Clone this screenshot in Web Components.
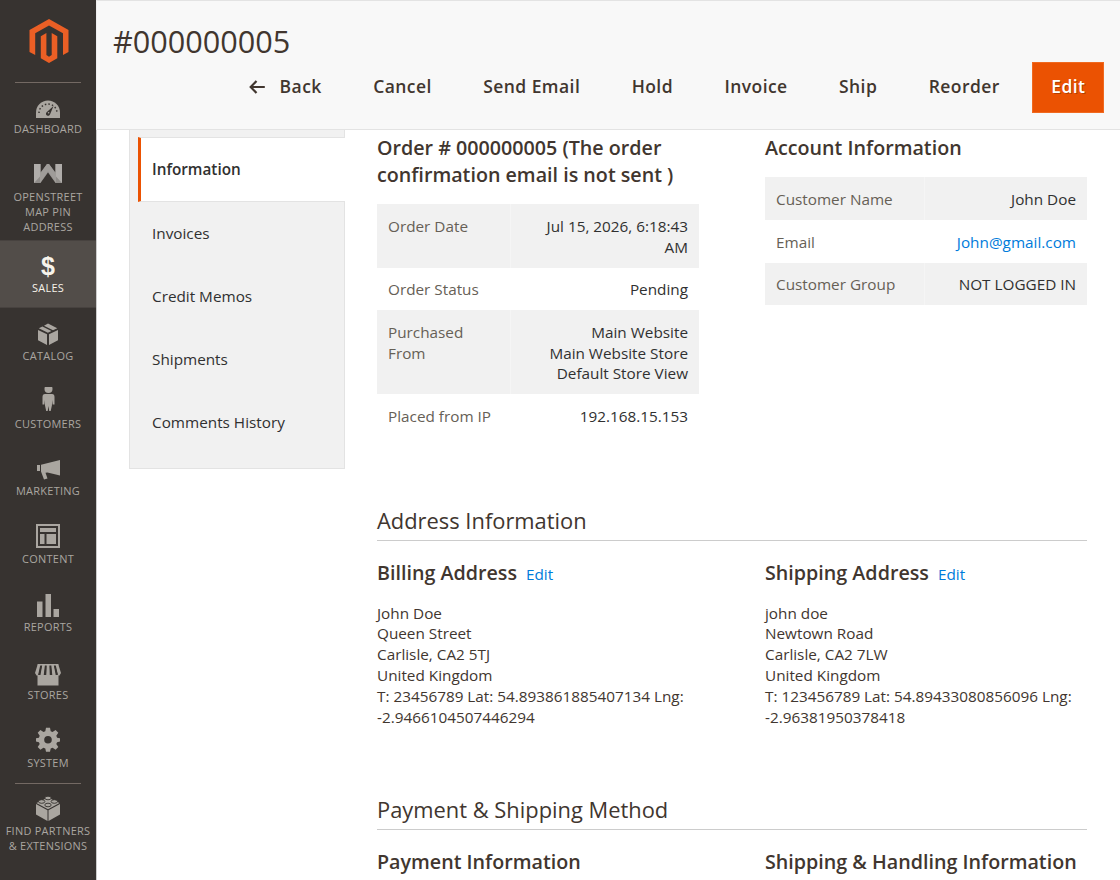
<!DOCTYPE html>
<html lang="en">
<head>
<meta charset="utf-8">
<title>#000000005 / Orders / Sales</title>
<style>
  html {
    font-size: 10.94px;
  }
  body {
    margin: 0;
    height: 880px;
    overflow: hidden;
    font-family: 'Open Sans', 'Noto Sans', sans-serif;
    font-size: 1.4rem;
    line-height: 1.36;
    color: #41362f;
    background: #fff;
  }
</style>
</head>
<body>
<admin-page>
  <admin-menu slot="menu">
    <menu-item icon="dashboard">Dashboard</menu-item>
    <menu-item icon="module" style="height: 90.9px">Openstreet Map Pin Address</menu-item>
    <menu-item icon="sales" active>Sales</menu-item>
    <menu-item icon="catalog">Catalog</menu-item>
    <menu-item icon="customers">Customers</menu-item>
    <menu-item icon="marketing">Marketing</menu-item>
    <menu-item icon="content">Content</menu-item>
    <menu-item icon="reports">Reports</menu-item>
    <menu-item icon="stores">Stores</menu-item>
    <menu-item icon="system">System</menu-item>
    <menu-item icon="partners" divided>Find Partners &amp; Extensions</menu-item>
  </admin-menu>

  <page-header slot="header" heading="#000000005">
    <page-action back>Back</page-action>
    <page-action>Cancel</page-action>
    <page-action>Send Email</page-action>
    <page-action>Hold</page-action>
    <page-action>Invoice</page-action>
    <page-action>Ship</page-action>
    <page-action>Reorder</page-action>
    <page-action primary>Edit</page-action>
  </page-header>

  <order-tabs slot="tabs">
    <order-tab active>Information</order-tab>
    <order-tab>Invoices</order-tab>
    <order-tab>Credit Memos</order-tab>
    <order-tab>Shipments</order-tab>
    <order-tab>Comments History</order-tab>
  </order-tabs>

  <page-section style="height: 372px">
    <info-block heading="Order # 000000005 (The order confirmation email is not sent )">
      <info-table label-width="134px">
        <info-row label="Order Date">Jul 15, 2026, 6:18:43 AM</info-row>
        <info-row label="Order Status">Pending</info-row>
        <info-row label="Purchased From">Main Website<br>Main Website Store<br>Default Store View</info-row>
        <info-row label="Placed from IP">192.168.15.153</info-row>
      </info-table>
    </info-block>
    <info-block heading="Account Information">
      <info-table label-width="160px">
        <info-row label="Customer Name">John Doe</info-row>
        <info-row label="Email"><text-link>John@gmail.com</text-link></info-row>
        <info-row label="Customer Group">NOT LOGGED IN</info-row>
      </info-table>
    </info-block>
  </page-section>

  <page-section heading="Address Information" style="height: 289px">
    <info-block heading="Billing Address">
      <text-link slot="action">Edit</text-link>
      John Doe<br>Queen Street<br>Carlisle, CA2 5TJ<br>United Kingdom<br>T: 23456789 Lat: 54.893861885407134 Lng: -2.9466104507446294
    </info-block>
    <info-block heading="Shipping Address">
      <text-link slot="action">Edit</text-link>
      john doe<br>Newtown Road<br>Carlisle, CA2 7LW<br>United Kingdom<br>T: 123456789 Lat: 54.89433080856096 Lng: -2.96381950378418
    </info-block>
  </page-section>

  <page-section heading="Payment &amp; Shipping Method">
    <info-block heading="Payment Information"></info-block>
    <info-block heading="Shipping &amp; Handling Information"></info-block>
  </page-section>
</admin-page>

<script>
const ICONS = {
  dashboard: `<g transform="translate(0 2)"><path d="M3 23V17.500a12 12 0 0 1 24 0V23z"/>
    <path d="M6 18a9 9 0 0 1 18 0" fill="none" stroke="#373330" stroke-width="1.500" stroke-dasharray="1.500 2.100"/>
    <path d="M20.500 11l-3.400 8.200a2.100 2.100 0 1 1-3.500-2z" fill="#373330"/><circle cx="15.600" cy="17.800" r=".8"/></g>`,
  module: `<g transform="translate(0 -2)"><path fill="#8f8c89" d="M1 6h6.500v8.500L14 6h2l6.500 8.500V6H29v19h-6.500L15 14.500 7.500 25H1z"/>
    <path fill="#b0adaa" d="M1 6h6.500v12L1 25zM22.500 6H29v19l-6.500-7z"/><path fill="#9f9c99" d="M14 6h2l7 10v9L15 13.500 7 25v-9z"/></g>`,
  catalog: `<path d="M5 11l9 4.300V26l-9-4.800zM16 15.300L25 11v10.200L16 26zM5.800 9.300l3.600-1.800 9 4.400-3.500 1.800zM11 6.700L15 4.500l9.300 4.700-4.300 2z"/>`,
  customers: `<g transform="translate(.5 -2)"><circle cx="15" cy="4" r="4"/><path d="M11.500 9h7q2.500 0 2.500 3v7.500h-1.900l-.4-4.500-.3 5.500-1.200 5.500h-1.500l-.7-5-.8 5h-1.500L11.500 20.500 11.300 15l-.4 4.500H9V12q0-3 2.500-3z"/></g>`,
  marketing: `<g transform="translate(0 1)"><path d="M4 9h3v6H4zM8 8.800L27 4v15.500l-12.500-3-2 .3 2 5.800-3.500 1-3-8H8z"/></g>`,
  content: `<g transform="translate(0 -2)"><path d="M3 3h24v24H3zM5 5v20h20V5z" fill-rule="evenodd"/><path d="M7 7h16v4H7zM7 13h4.500v10H7zM13.500 13H23v10h-9.500z"/></g>`,
  reports: `<g transform="translate(0 -1)"><path d="M4 11.500h5.500V27H4zM12.500 4H18v23h-5.500zM20.500 19H26v8h-5.500z"/></g>`,
  stores: `<g transform="translate(0 1)"><path d="M4.500 15h21v10.500h-21zM4.500 4h21v1.500h-21z"/>
    <path d="M4.500 5h2.800L5 15.500H3.500L2 13zM9.200 5h2.700l-1.200 10.500H7.400zM13.700 5h2.700l.4 10.500h-3.600zM18.300 5h2.500l2 10.500h-3.500zM22.700 5h2.800L28 13l-1.500 2.500H25z"/>
    <path d="M7.700 6h1.200L6.800 14.500H5.600zM12.300 6h1l-.3 8.500h-1.600zM16.800 6h1l1 8.500h-1.600zM21.200 6h1.200l2.300 8.500h-1.400z" fill="#373330"/></g>`,
  system: `<path transform="translate(0 -1.3)" fill-rule="evenodd" d="M13 3h4l.7 3.600 1.800.8 3.100-2.100 2.700 2.700-2 3.100.8 1.900L27 13.500v3.300l-2.900.7-.8 1.900 2 3-2.700 2.700-3-2-1.900.8L17 27h-4l-.7-3.100-1.900-.8-3 2-2.700-2.700 2-3-.8-1.900L3 16.800v-3.300l2.900-.5.8-1.900-2-3.100 2.700-2.700 3.100 2.100 1.800-.8zM15 11.200a3.800 3.800 0 1 0 0 7.600 3.800 3.800 0 1 0 0-7.600z"/>`,
  partners: `<path d="M3 10l11.500 6.300V27L3 20.500zM27 10l-11.500 6.300V27L27 20.500zM3.500 9L15 3.500 26.500 9 15 15.300z"/>
    <g stroke="#373330" stroke-width=".9"><ellipse cx="15" cy="4" rx="3.200" ry="1.800"/><ellipse cx="8.700" cy="7.500" rx="3.200" ry="1.800"/><ellipse cx="21.300" cy="7.500" rx="3.200" ry="1.800"/><ellipse cx="15" cy="11" rx="3.200" ry="1.800"/></g>`
};

class AdminPage extends HTMLElement {
  constructor() {
    super();
    this.attachShadow({mode: 'open'}).innerHTML = `
      <style>
        :host { display: flex; height: 880px; }
        main { flex: 1; min-width: 0; display: flex; flex-direction: column; }
        .body { flex: 1; min-height: 0; display: flex; align-items: flex-start; gap: 32px; padding: 0 33px 0 32px; border-left: 1px solid #ccc; overflow: hidden; }
        .content { flex: 1; min-width: 0; padding-top: 4px; }
      </style>
      <slot name="menu"></slot>
      <main>
        <slot name="header"></slot>
        <div class="body">
          <slot name="tabs"></slot>
          <div class="content"><slot></slot></div>
        </div>
      </main>
    `;
  }
}

class AdminMenu extends HTMLElement {
  constructor() {
    super();
    this.attachShadow({mode: 'open'}).innerHTML = `
      <style>
        :host { display: flex; flex-direction: column; flex: 0 0 96px; background: #373330; }
        .logo { display: flex; justify-content: center; height: 63px; padding: 19px 0 0 1px; border-bottom: 1px solid #736963; margin: 0 15px -1.4px; }
      </style>
      <div class="logo">
        <svg width="40" height="44" viewBox="0 0 40 44" fill="#eb5f25">
          <path d="M20 0l19.500 11v22L34 36V14.300L20 6.400 6.200 14.300V36L.500 33V11z"/>
          <path d="M11.800 17.200l5.600-3.200v22l2.600 1.700 2.700-1.700V14l5.600 3.200v22L20 44l-8.200-4.800z"/>
        </svg>
      </div>
      <slot></slot>
    `;
  }
}

class MenuItem extends HTMLElement {
  connectedCallback() {
    const icon = this.getAttribute('icon');
    // the sales icon is simply a bold currency sign
    const glyph = icon === 'sales'
      ? '<b>$</b>'
      : `<svg width="30" height="30" viewBox="0 0 30 30" fill="currentColor">${ICONS[icon]}</svg>`;

    this.attachShadow({mode: 'open'}).innerHTML = `
      <style>
        :host {
          display: block;
          box-sizing: border-box;
          height: 67.86px;
          padding: 12px 4px 0;
          color: #aaa6a0;
          font-size: 1rem;
          line-height: 14.8px;
          letter-spacing: .025em;
          text-align: center;
          text-transform: uppercase;
        }
        :host([active]) { background: #524d49; color: #f7f3eb; box-shadow: inset 0 1px #47423f, inset 0 -1px #47423f; }
        :host([divided])::before { content: ''; display: block; height: 1px; margin: -12px 11px 11px; background: #736963; }
        .icon { display: flex; justify-content: center; align-items: center; height: 28px; margin-bottom: .5px; }
        .icon svg { flex: none; }
        b { font: bold 25px/28px 'Liberation Sans', sans-serif; letter-spacing: 0; }
      </style>
      <div class="icon">${glyph}</div>
      <slot></slot>
    `;
  }
}

class PageHeader extends HTMLElement {
  connectedCallback() {
    this.attachShadow({mode: 'open'}).innerHTML = `
      <style>
        :host { display: block; box-sizing: border-box; height: 130px; padding: 20px 16px 0; background: #f8f8f8; border: solid #e3e3e3; border-width: 1px 0; border-left: 1px solid #eee; }
        h1 { margin: 0; font-size: 2.8rem; font-weight: 400; line-height: 41px; }
        .actions { display: flex; justify-content: flex-end; gap: 1.3rem; }
      </style>
      <h1>${this.getAttribute('heading')}</h1>
      <div class="actions"><slot></slot></div>
    `;
  }
}

class PageAction extends HTMLElement {
  connectedCallback() {
    const arrow = this.hasAttribute('back')
      ? '<svg width="16" height="14" viewBox="0 0 16 14" fill="none" stroke="currentColor" stroke-width="2.2"><path d="M15.800 7H2M7.500 1L1.700 7l5.800 6"/></svg>'
      : '';
    this.attachShadow({mode: 'open'}).innerHTML = `
      <style>
        :host { display: flex; align-items: center; gap: 15px; box-sizing: border-box; height: 51px; padding: 0 1.7rem 2px; font-size: 1.6rem; font-weight: 600; letter-spacing: .025em; white-space: nowrap; }
        :host([primary]) { margin-left: -.4px; padding-left: 19px; background: #eb5202; box-shadow: inset 0 0 0 1px #f0691f; color: #fff; text-shadow: 1px 1px 0 rgba(0, 0, 0, .25); }
      </style>
      ${arrow}<slot></slot>
    `;
  }
}

class OrderTabs extends HTMLElement {
  constructor() {
    super();
    this.attachShadow({mode: 'open'}).innerHTML = `
      <style>
        :host { display: block; box-sizing: border-box; flex: 0 0 216px; height: 339px; padding: 7px 0 0 8px; background: #f1f1f1; border: 1px solid #e3e3e3; border-top: 0; }
      </style>
      <slot></slot>
    `;
  }
}

class OrderTab extends HTMLElement {
  constructor() {
    super();
    this.attachShadow({mode: 'open'}).innerHTML = `
      <style>
        :host { display: flex; align-items: center; box-sizing: border-box; height: 63px; padding-left: 14px; color: #303030; }
        :host([active]) { height: 65px; margin-bottom: -.6px; padding-left: 11px; margin-right: -1px; border: solid #e3e3e3; border-width: 1px 0; border-left: 3px solid #eb5202; background: #fff; font-weight: 600; }
      </style>
      <slot></slot>
    `;
  }
}

class PageSection extends HTMLElement {
  connectedCallback() {
    const heading = this.getAttribute('heading');
    this.attachShadow({mode: 'open'}).innerHTML = `
      <style>
        :host { display: block; }
        h2 { margin: 0 0 18px; padding: 1px 0 5px; border-bottom: 1px solid #ccc; font-size: 2rem; font-weight: 400; line-height: 28px; }
        .columns { display: grid; grid-template-columns: 1fr 1fr; gap: 66px; }
      </style>
      ${heading ? `<h2>${heading}</h2>` : ''}
      <div class="columns"><slot></slot></div>
    `;
  }
}

class InfoBlock extends HTMLElement {
  connectedCallback() {
    this.attachShadow({mode: 'open'}).innerHTML = `
      <style>
        :host { display: block; min-width: 0; }
        header { display: flex; align-items: baseline; gap: 9px; margin-bottom: 16.6px; }
        h3 { margin: 0; font-size: 1.8rem; font-weight: 600; line-height: 27px; }
      </style>
      <header><h3>${this.getAttribute('heading')}</h3><slot name="action"></slot></header>
      <slot></slot>
    `;
  }
}

class InfoTable extends HTMLElement {
  connectedCallback() {
    this.style.setProperty('--label-width', this.getAttribute('label-width'));
    this.attachShadow({mode: 'open'}).innerHTML = `
      <style>
        :host { display: block; margin-top: -.4px; line-height: 20.7px; }
        ::slotted(:nth-child(odd)) { --row-bg: #f1f1f1; }
      </style>
      <slot></slot>
    `;
  }
}

class InfoRow extends HTMLElement {
  connectedCallback() {
    this.attachShadow({mode: 'open'}).innerHTML = `
      <style>
        :host { display: flex; background: var(--row-bg, #fff); }
        div { box-sizing: border-box; padding: 11.8px 11px 10.2px; }
        .label { flex: 0 0 var(--label-width); color: #666056; border-right: 1px solid rgba(255, 255, 255, .3); }
        .value { flex: 1; color: #303030; text-align: right; }
      </style>
      <div class="label">${this.getAttribute('label')}</div>
      <div class="value"><slot></slot></div>
    `;
  }
}

class TextLink extends HTMLElement {
  constructor() {
    super();
    this.attachShadow({mode: 'open'}).innerHTML = `
      <style>
        :host { display: inline; color: #007bdb; cursor: pointer; }
      </style>
      <slot></slot>
    `;
  }
}

customElements.define('admin-page', AdminPage);
customElements.define('admin-menu', AdminMenu);
customElements.define('menu-item', MenuItem);
customElements.define('page-header', PageHeader);
customElements.define('page-action', PageAction);
customElements.define('order-tabs', OrderTabs);
customElements.define('order-tab', OrderTab);
customElements.define('page-section', PageSection);
customElements.define('info-block', InfoBlock);
customElements.define('info-table', InfoTable);
customElements.define('info-row', InfoRow);
customElements.define('text-link', TextLink);
</script>
</body>
</html>
